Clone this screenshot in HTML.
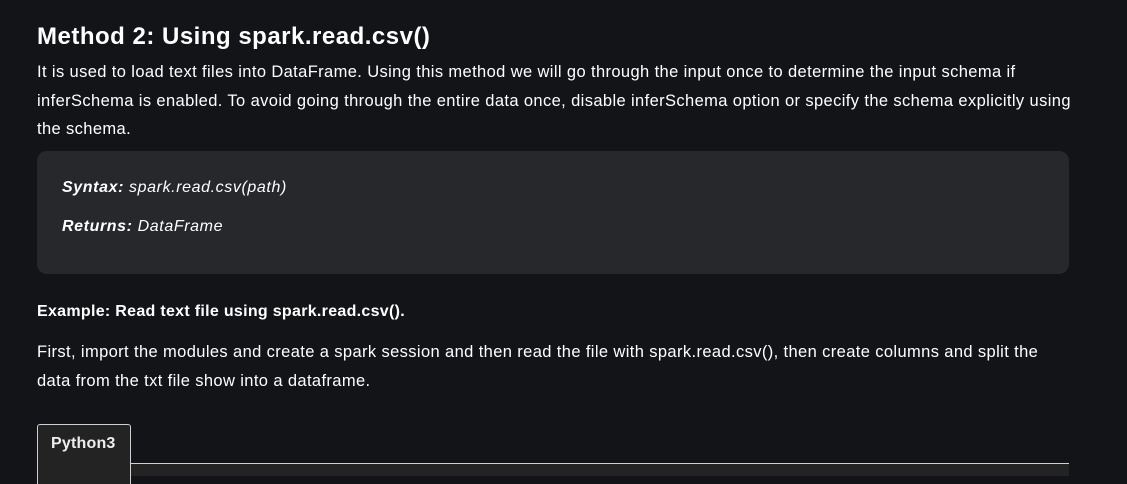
<!DOCTYPE html>
<html><head><style>
body{margin:0;background:#131417;color:#fff;font-family:"Liberation Sans",sans-serif;width:1127px;height:476px;overflow:hidden;position:relative}
.a{position:absolute;left:37px;white-space:nowrap}
h2{position:absolute;left:37px;top:23px;margin:0;font-size:24px;font-weight:bold;letter-spacing:0.5px}
p{margin:0;font-size:16.5px;line-height:28.5px;letter-spacing:0.38px}
.box{position:absolute;left:37px;top:151px;width:1032px;height:123px;background:#27282c;border-radius:10px}
.box div{position:absolute;left:25px;font-style:italic;font-size:16px;letter-spacing:0.6px}
.tab{position:absolute;left:37px;top:424px;width:94px;height:60px;background:#232323;border:1px solid #d0d0d0;border-bottom:none;border-radius:3px 3px 0 0;box-sizing:border-box}
.tab span{position:absolute;left:13px;top:10px;font-weight:bold;font-size:16px;color:#eee;letter-spacing:0.2px}
.line{position:absolute;left:130px;top:463px;width:939px;height:1px;background:#d0d0d0}
.under{position:absolute;left:131px;top:464px;width:938px;height:12px;background:#232323}
</style></head><body>
<h2>Method 2: Using spark.read.csv()</h2>
<div class="a" style="top:58px"><p>It is used to load text files into DataFrame. Using this method we will go through the input once to determine the input schema if<br>inferSchema is enabled. To avoid going through the entire data once, disable inferSchema option or specify the schema explicitly using<br>the schema.</p></div>
<div class="box">
<div style="top:28px"><b>Syntax:</b> spark.read.csv(path)</div>
<div style="top:67px"><b>Returns:</b> DataFrame</div>
</div>
<div class="a" style="top:303px;font-size:16px;font-weight:bold;letter-spacing:0.3px">Example: Read text file using spark.read.csv().</div>
<div class="a" style="top:338px"><p>First, import the modules and create a spark session and then read the file with spark.read.csv(), then create columns and split the<br>data from the txt file show into a dataframe.</p></div>
<div class="under"></div>
<div class="line"></div>
<div class="tab"><span>Python3</span></div>
</body></html>
